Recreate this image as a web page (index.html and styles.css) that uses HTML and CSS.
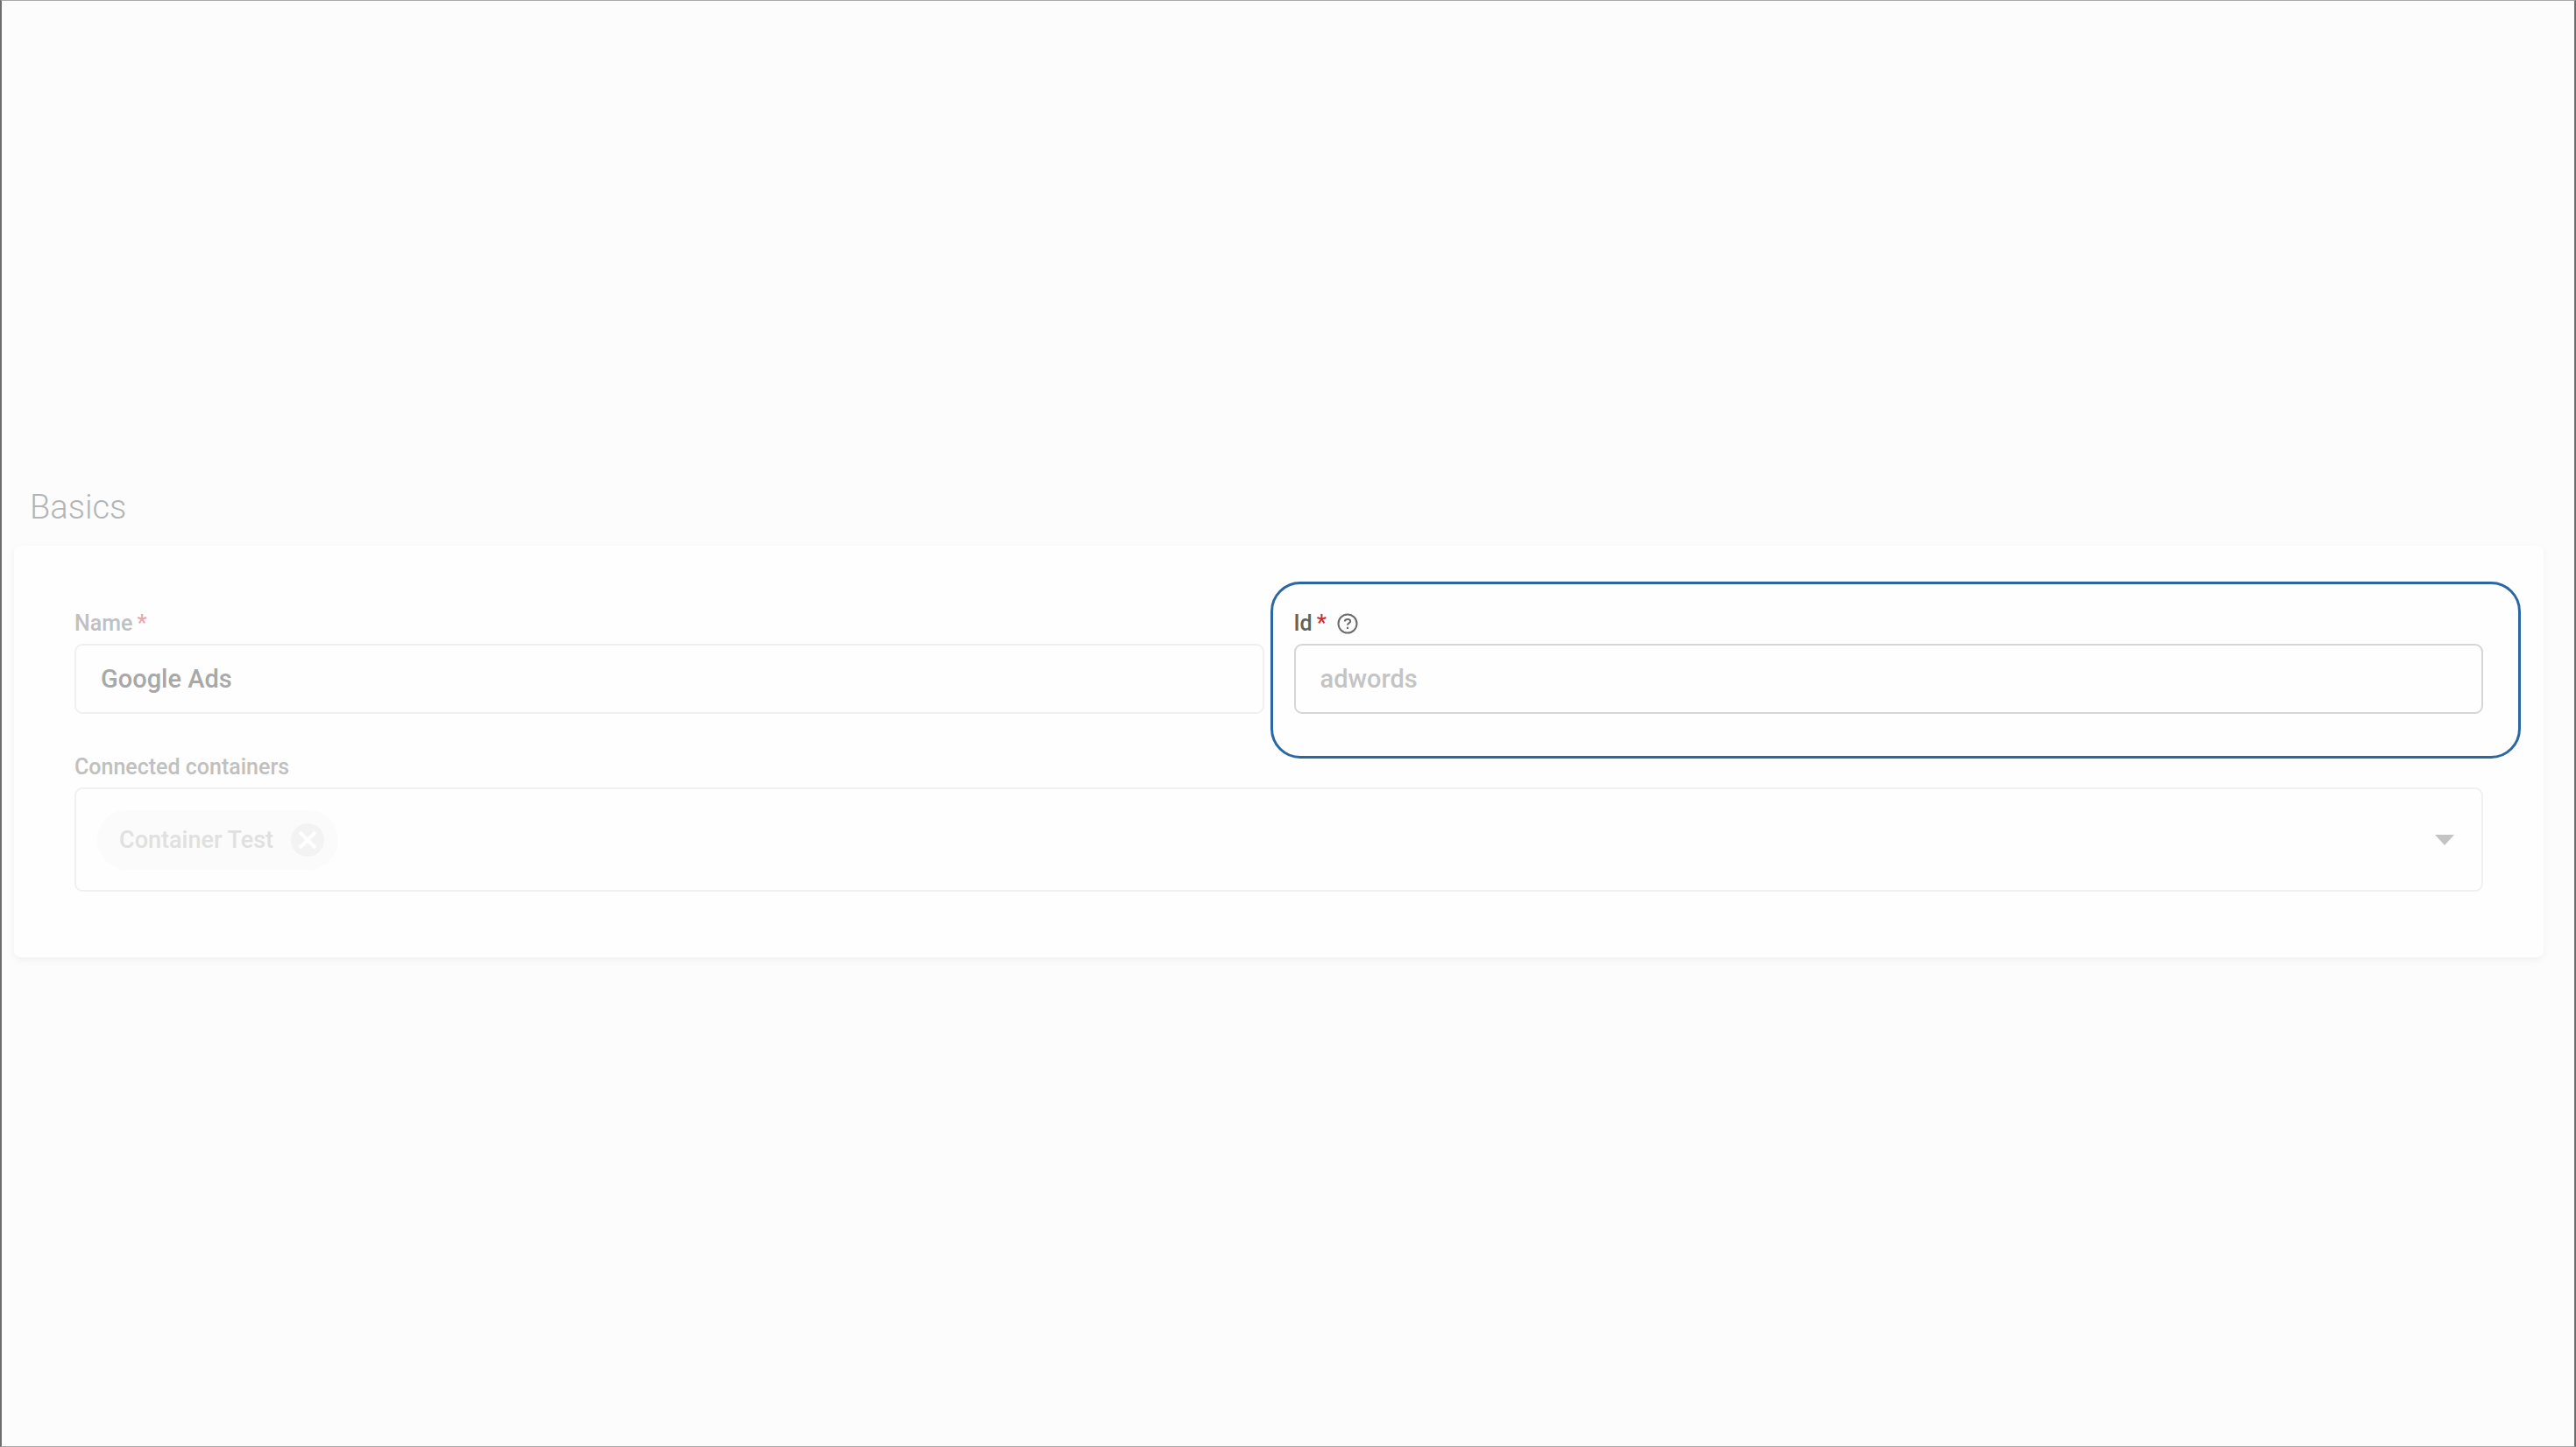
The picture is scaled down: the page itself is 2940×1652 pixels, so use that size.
FILE: index.html
```
<!DOCTYPE html>
<html lang="en">
<head>
    <meta charset="UTF-8">
    <title>Basics</title>
    <link rel="stylesheet" href="styles.css">
</head>
<body>
    <main class="page">
        <h1>Basics</h1>
        <form class="card">
            <div class="field faded">
                <div class="label-row">
                    <label for="name">Name</label>
                    <span class="required">*</span>
                </div>
                <input type="text" id="name" value="Google Ads">
            </div>
            <div class="field highlight">
                <div class="label-row">
                    <label for="id">Id</label>
                    <span class="required">*</span>
                    <svg class="help" viewBox="0 0 24 24" fill="none" stroke="#6b6b6b" stroke-width="2">
                        <circle cx="12" cy="12" r="10.5"/>
                        <path d="M8.8 9.4C8.8 7.8 10.2 6.9 12 6.9s3.2 .9 3.2 2.4c0 2-3.2 2.2-3.2 4.5"/>
                        <path d="M12 15.8v2.2"/>
                    </svg>
                </div>
                <input type="text" id="id" placeholder="adwords">
            </div>
            <div class="field faded wide">
                <div class="label-row">
                    <label for="containers">Connected containers</label>
                </div>
                <div class="select-box">
                    <select id="containers">
                        <option></option>
                    </select>
                    <div class="chip">
                        <span>Container Test</span>
                        <button type="button" class="remove" aria-label="Remove">
                            <svg viewBox="0 0 38 38" stroke="#ffffff" stroke-width="4">
                                <path d="M10 10l18 18M28 10L10 28"/>
                            </svg>
                        </button>
                    </div>
                    <svg class="arrow" viewBox="0 0 22 12">
                        <path d="M0 0h22L11 12z" fill="#c4c4c4"/>
                    </svg>
                </div>
            </div>
        </form>
    </main>
</body>
</html>
```
FILE: styles.css
```
* {
    box-sizing: border-box;
}

body {
    margin: 0;
    font-family: Roboto, Arial, sans-serif;
    background-color: #fcfcfc;
}

.page {
    min-height: 100vh;
    display: flex;
    flex-direction: column;
    justify-content: center;
    padding: 0 35px 0 14px;
    border: 1px solid #a8a8a8;
    border-left: 2px solid #6e6e6e;
    border-right: 2px solid #6e6e6e;
}

h1 {
    margin: 0 0 24px 18px;
    font-size: 38px;
    line-height: 40px;
    font-weight: 300;
    color: #b4b4b4;
}

.card {
    display: grid;
    grid-template-columns: 1fr 1fr;
    gap: 45px 34px;
    padding: 73px 69px 75px;
    background-color: #fefefe;
    border-radius: 8px;
    box-shadow: 0 3px 10px rgba(0, 0, 0, 0.05);
}

.field {
    position: relative;
}

.wide {
    grid-column: 1 / -1;
}

.label-row {
    display: flex;
    align-items: center;
    gap: 5px;
    height: 32px;
    margin-bottom: 7px;
    font-size: 25px;
    line-height: 32px;
    font-weight: 500;
    color: #626262;
}

.required {
    color: #cc2f36;
}

.help {
    width: 24px;
    height: 24px;
    margin-left: 7px;
}

input, select {
    display: block;
    width: 100%;
    height: 80px;
    padding: 0 28px;
    border: 2px solid #d6d6d6;
    border-radius: 9px;
    background-color: #fefefe;
    font-family: inherit;
    font-size: 29px;
    font-weight: 500;
    color: #a8a8a8;
}

input::placeholder {
    color: #c4c4c4;
    opacity: 1;
}

.faded .label-row {
    color: #c0c0c0;
}

.faded .required {
    color: #eba5a8;
}

.faded input, .faded select {
    border-color: #f0f0f0;
}

/* ring around the active field */
.highlight::before {
    content: "";
    position: absolute;
    top: -32px;
    right: -43px;
    bottom: -51px;
    left: -27px;
    border: 3px solid #2b67a3;
    border-radius: 34px;
    pointer-events: none;
}

.select-box {
    position: relative;
}

select {
    height: 119px;
    appearance: none;
}

.chip {
    position: absolute;
    top: 26px;
    left: 26px;
    display: flex;
    align-items: center;
    gap: 20px;
    height: 68px;
    padding: 0 16px 0 25px;
    border-radius: 34px;
    background-color: #fbfbfb;
    font-size: 27px;
    font-weight: 500;
    color: #e0e0e0;
}

.remove {
    width: 38px;
    height: 38px;
    padding: 0;
    border: none;
    border-radius: 50%;
    background-color: #f3f3f3;
    cursor: pointer;
}

.remove svg {
    display: block;
}

.arrow {
    position: absolute;
    top: 54px;
    right: 33px;
    width: 22px;
    height: 12px;
    pointer-events: none;
}
```
